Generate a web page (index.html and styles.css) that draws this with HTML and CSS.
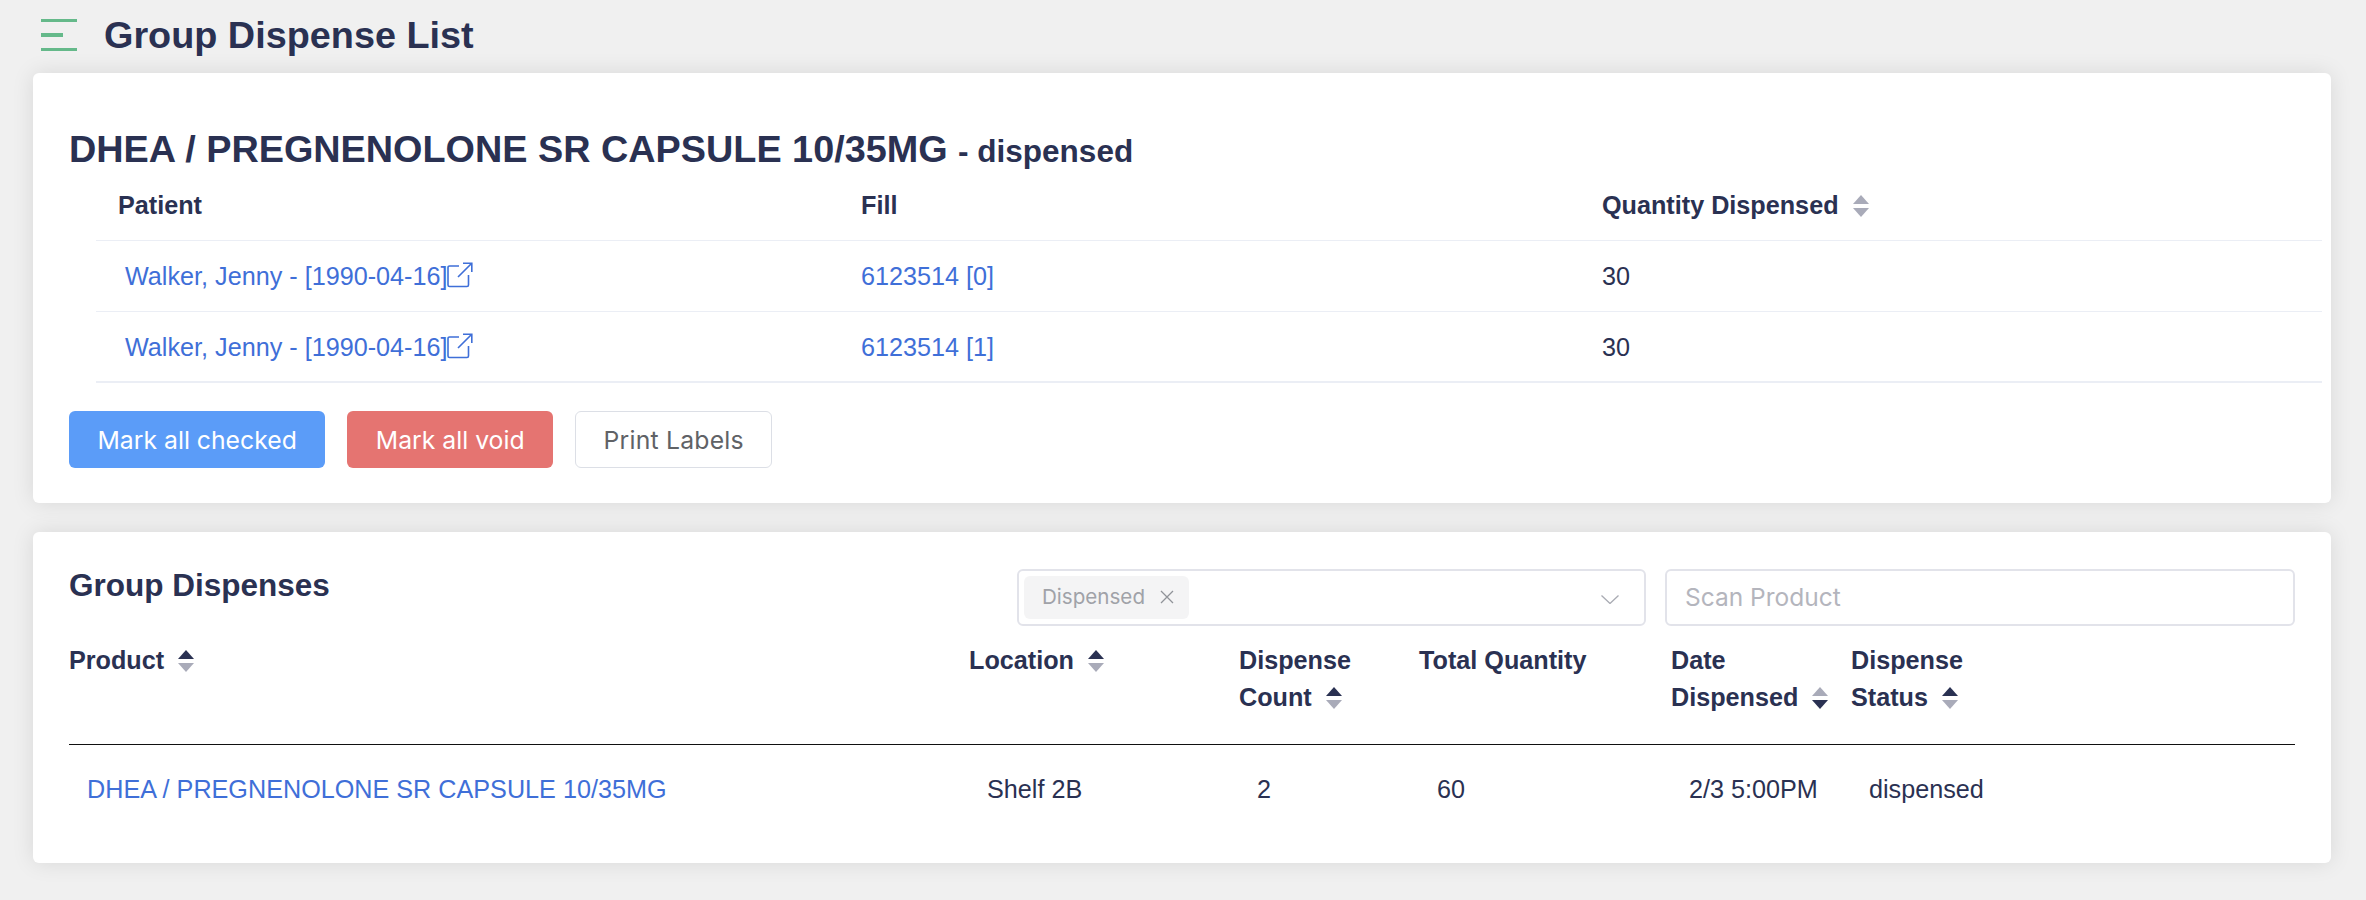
FILE: index.html
```html
<!DOCTYPE html>
<html lang="en">
<head>
  <meta charset="UTF-8" />
  <title>Group Dispense List</title>
  <link rel="stylesheet" href="styles.css">
</head>
<body>
  <svg class="defs" width="0" height="0">
    <symbol id="ext" viewBox="0 0 26 26">
      <path d="M12 4H2.5A1.5 1.5 0 0 0 1 5.500V23a1.500 1.500 0 0 0 1.500 1.500H20a1.500 1.500 0 0 0 1.500-1.500V13" fill="none" stroke="currentColor" stroke-width="1.600"/>
      <path d="M11 15L24.500 1.500M16 1.200h8.800V10" fill="none" stroke="currentColor" stroke-width="1.600"/>
    </symbol>
  </svg>

  <header class="top">
    <div class="burger"><i></i><i class="short"></i><i></i></div>
    <h1>Group Dispense List</h1>
  </header>

  <section class="card first">
    <h2>DHEA / PREGNENOLONE SR CAPSULE 10/35MG <small>- dispensed</small></h2>
    <table class="fills">
      <thead>
        <tr>
          <th>Patient</th>
          <th>Fill</th>
          <th>Quantity Dispensed
            <svg class="sort" viewBox="0 0 16 22"><path class="off" d="M8 0l8 9H0z"/><path class="off" d="M0 13h16l-8 9z"/></svg>
          </th>
        </tr>
      </thead>
      <tbody>
        <tr>
          <td><a class="patient" href="#">Walker, Jenny - [1990-04-16]<svg class="ext"><use href="#ext"/></svg></a></td>
          <td><a href="#">6123514 [0]</a></td>
          <td>30</td>
        </tr>
        <tr>
          <td><a class="patient" href="#">Walker, Jenny - [1990-04-16]<svg class="ext"><use href="#ext"/></svg></a></td>
          <td><a href="#">6123514 [1]</a></td>
          <td>30</td>
        </tr>
      </tbody>
    </table>
    <div class="actions">
      <button class="btn blue">Mark all checked</button>
      <button class="btn red">Mark all void</button>
      <button class="btn plain">Print Labels</button>
    </div>
  </section>

  <section class="card second">
    <div class="bar">
      <h3>Group Dispenses</h3>
      <div class="select">
        <span class="tag">Dispensed
          <svg class="x" viewBox="0 0 14 14"><path d="M1 1l12 12M13 1L1 13"/></svg>
        </span>
        <svg class="chev" viewBox="0 0 18 9"><path d="M.5.5L9 8.500 17.500.5"/></svg>
      </div>
      <input class="scan" type="text" placeholder="Scan Product" />
    </div>
    <table class="groups">
      <thead>
        <tr>
          <th class="c-product">Product
            <svg class="sort" viewBox="0 0 16 22"><path d="M8 0l8 9H0z"/><path class="off" d="M0 13h16l-8 9z"/></svg>
          </th>
          <th class="c-location">Location
            <svg class="sort" viewBox="0 0 16 22"><path d="M8 0l8 9H0z"/><path class="off" d="M0 13h16l-8 9z"/></svg>
          </th>
          <th class="c-count">Dispense<br />Count
            <svg class="sort" viewBox="0 0 16 22"><path d="M8 0l8 9H0z"/><path class="off" d="M0 13h16l-8 9z"/></svg>
          </th>
          <th class="c-total">Total Quantity</th>
          <th class="c-date">Date<br />Dispensed
            <svg class="sort" viewBox="0 0 16 22"><path class="off" d="M8 0l8 9H0z"/><path d="M0 13h16l-8 9z"/></svg>
          </th>
          <th>Dispense<br />Status
            <svg class="sort" viewBox="0 0 16 22"><path d="M8 0l8 9H0z"/><path class="off" d="M0 13h16l-8 9z"/></svg>
          </th>
        </tr>
      </thead>
      <tbody>
        <tr>
          <td><a href="#">DHEA / PREGNENOLONE SR CAPSULE 10/35MG</a></td>
          <td>Shelf 2B</td>
          <td>2</td>
          <td>60</td>
          <td>2/3 5:00PM</td>
          <td>dispensed</td>
        </tr>
      </tbody>
    </table>
  </section>
</body>
</html>
```

FILE: styles.css
```css
* {
  box-sizing: border-box;
}
body {
  margin: 0;
  height: 900px;
  overflow: hidden;
  background: #f0f0f0;
  color: #2a3152;
  font-family: "Liberation Sans", Arial, sans-serif;
  font-size: 25.2px;
}

.defs {
  display: block;
  height: 0;
}

/* Top bar */
.top {
  display: flex;
  align-items: center;
  height: 73px;
  padding: 0 0 0 41px;
}
.burger {
  display: flex;
  flex-direction: column;
  justify-content: space-between;
  width: 36px;
  height: 32px;
  margin-right: 27px;
  margin-top: -4px;
}
.burger i {
  display: block;
  height: 3px;
  background: #65b98a;
}
.burger i.short {
  width: 22px;
  height: 4px;
}
h1 {
  margin: -2px 0 0;
  font-size: 37.8px;
  font-weight: 700;
}

/* Cards */
.card {
  margin: 0 35px 0 33px;
  background: #fff;
  border-radius: 6px;
  box-shadow: 0 0 22px rgba(0, 0, 0, 0.1);
}
.first {
  height: 430px;
  padding: 56px 9px 0 36px;
}
.second {
  height: 331px;
  margin-top: 29px;
  padding: 37px 36px 0;
}

h2 {
  margin: 0;
  font-size: 37.8px;
  line-height: 40px;
  font-weight: 700;
}
h2 small {
  font-size: 31.5px;
}
h3 {
  margin: 0;
  flex: 1;
  font-size: 31.5px;
  line-height: 32px;
  font-weight: 700;
}

a {
  color: #3f6fd8;
  text-decoration: none;
}

/* Fills table */
table {
  border-collapse: collapse;
  table-layout: fixed;
}
.fills {
  width: 2226px;
  margin-left: 27px;
}
.fills th {
  height: 69px;
  padding: 0 22px;
  text-align: left;
  font-weight: 700;
  border-bottom: 1px solid #ebeef5;
}
.fills th:first-child {
  width: 743px;
}
.fills th:nth-child(2) {
  width: 741px;
}
.fills td {
  height: 71px;
  padding: 2px 22px 0;
  border-bottom: 1px solid #ebeef5;
}
.fills tbody tr:last-child td {
  border-bottom: 2px solid #ebeef5;
}
.patient {
  margin-left: 7px;
}
.ext {
  width: 26px;
  height: 26px;
  vertical-align: -3px;
}

.sort {
  width: 16px;
  height: 22px;
  margin-left: 7px;
  vertical-align: -3px;
  fill: #2a3152;
}
.sort .off {
  fill: #a9abb9;
}

/* Buttons */
.actions {
  display: flex;
  gap: 22px;
  margin-top: 28px;
}
.btn {
  height: 57px;
  padding: 0 27.500px;
  border: 1px solid transparent;
  border-radius: 6px;
  font-family: Inter, "Liberation Sans", sans-serif;
  font-size: 24.75px;
  color: #fff;
}
.blue {
  background: #5b9cf8;
}
.red {
  background: #e57471;
}
.plain {
  background: #fff;
  border-color: #dcdfe6;
  color: #606266;
  letter-spacing: 0.2px;
}

/* Filters */
.bar {
  display: flex;
  align-items: flex-start;
  height: 57px;
}
.select {
  display: flex;
  align-items: center;
  justify-content: space-between;
  width: 629px;
  height: 57px;
  padding: 0 25px 0 5px;
  border: 2px solid #e2e3ea;
  border-radius: 6px;
}
.tag {
  display: flex;
  align-items: center;
  justify-content: space-between;
  width: 165px;
  height: 43px;
  padding: 0 15px 2px 18px;
  background: #f4f4f5;
  border-radius: 6px;
  color: #a0a2a8;
  font-family: Inter, "Liberation Sans", sans-serif;
  font-size: 20.6px;
}
.x {
  width: 14px;
  height: 14px;
  fill: none;
  stroke: #909399;
  stroke-width: 1.300;
}
.chev {
  width: 18px;
  height: 9px;
  fill: none;
  stroke: #a9abb3;
  stroke-width: 1.300;
  margin-top: 4px;
}
.scan {
  width: 630px;
  height: 57px;
  margin-left: 19px;
  padding: 0 18px 2px;
  border: 2px solid #e2e3ea;
  border-radius: 6px;
  font-family: Inter, "Liberation Sans", sans-serif;
  font-size: 24.5px;
}
.scan::placeholder {
  color: #b4b5bd;
}

/* Group table */
.groups {
  width: 2226px;
}
.groups th {
  height: 118px;
  padding: 16px 0 0;
  vertical-align: top;
  text-align: left;
  font-weight: 700;
  line-height: 37px;
  border-bottom: 1px solid #111;
}
.groups td {
  height: 90px;
  padding: 0 18px;
}
.c-product { width: 900px; }
.c-location { width: 270px; }
.c-count { width: 180px; }
.c-total { width: 252px; }
.c-date { width: 180px; }
```
